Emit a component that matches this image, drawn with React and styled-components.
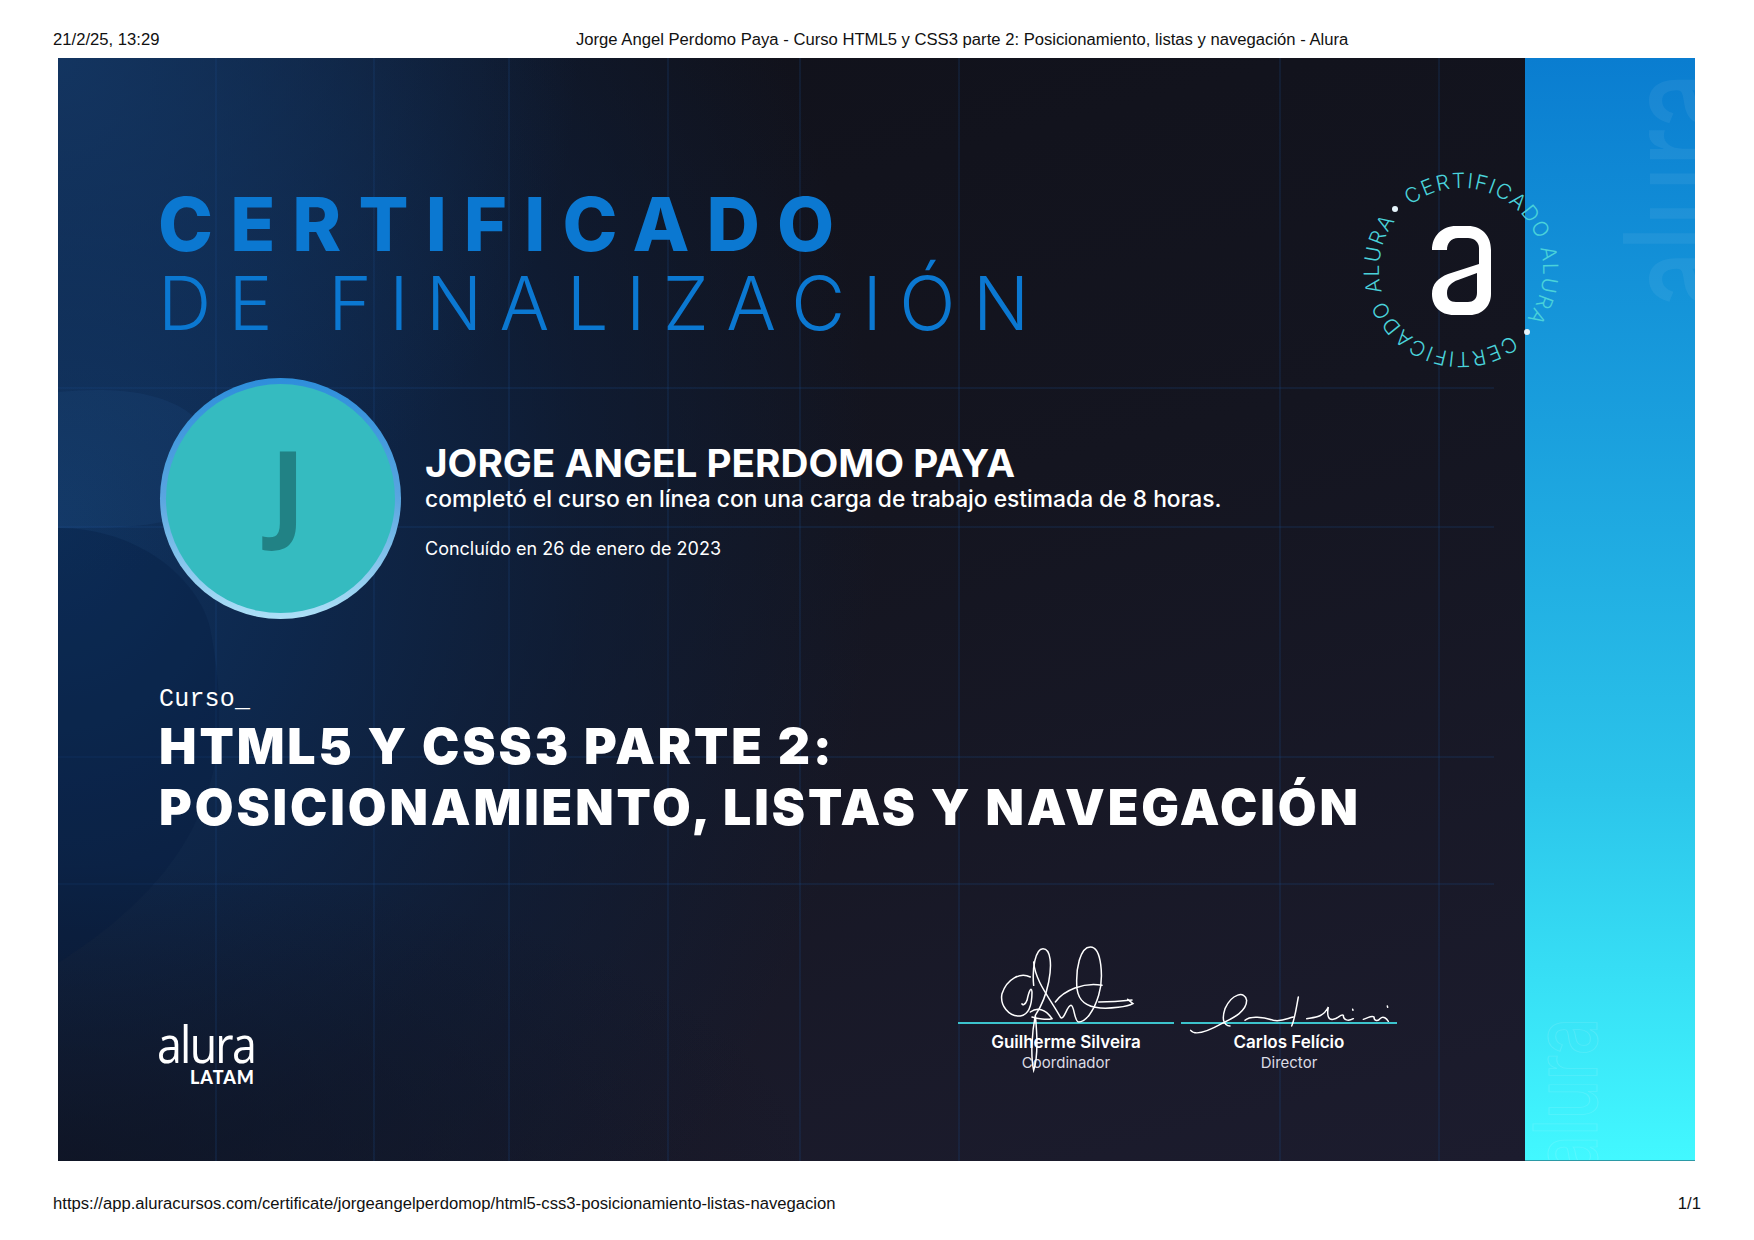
import React from "react";
import styled, { createGlobalStyle } from "styled-components";

const GlobalStyle = createGlobalStyle`
    html, body {
        margin: 0;
        padding: 0;
        background: #fff;
    }
`;

const sans = `"Inter", "Liberation Sans", sans-serif`;
const lineColor = "rgba(24, 72, 135, 0.2)";

// the faint grid behind the certificate, positions are relative to Main
const verticalLines = [157, 315, 450, 609, 741, 900, 1221, 1380];
const horizontalLines = [329, 468, 698, 825];
const gridImages = [
    ...verticalLines.map((x) => `linear-gradient(${lineColor}, ${lineColor}) ${x}px 0 / 2px 100% no-repeat`),
    ...horizontalLines.map((y) => `linear-gradient(${lineColor}, ${lineColor}) 0 ${y}px / 1436px 2px no-repeat`),
].join(", ");

const Page = styled.div`
    width: 1754px;
    height: 1240px;
    overflow: hidden;
    display: flex;
    flex-direction: column;
    font-family: "Liberation Sans", Arial, sans-serif;
    color: #111;
`;

const PrintHeader = styled.header`
    height: 58px;
    box-sizing: border-box;
    padding: 30px 0 0 53px;
    display: flex;
    font-size: 16.65px;
    line-height: 20px;
`;

const PrintDate = styled.span`
    width: 523px;
`;

const PrintFooter = styled.footer`
    flex: 1;
    box-sizing: border-box;
    padding: 33px 53px 0 53px;
    display: flex;
    justify-content: space-between;
    font-size: 16.65px;
    line-height: 20px;
`;

const Certificate = styled.section`
    position: relative;
    margin-left: 58px;
    width: 1637px;
    height: 1103px;
    display: flex;
    flex: none;
    font-family: ${sans};
`;

const Main = styled.div`
    position: relative;
    flex: 1;
    box-sizing: border-box;
    padding: 127px 128px 75px 101px;
    display: flex;
    flex-direction: column;
    color: #fff;
    background: ${gridImages},
        radial-gradient(ellipse 760px 300px at 0 100%, rgba(14, 18, 32, 0.7) 0%, rgba(14, 18, 32, 0) 100%),
        radial-gradient(ellipse 520px 520px at 0 0, rgba(20, 56, 102, 0.85) 0%, rgba(20, 56, 102, 0) 100%),
        radial-gradient(ellipse 820px 1000px at 0 42%, #10335f 0%, rgba(13, 41, 80, 0.92) 30%, rgba(13, 32, 62, 0.6) 65%, rgba(13, 30, 55, 0) 100%),
        linear-gradient(165deg, #10111a 0%, #141520 45%, #1c1c2e 100%);
`;

const Blobs = styled.svg`
    position: absolute;
    left: 0;
    top: 0;
    width: 700px;
    height: 1103px;
`;

const Title = styled.h1`
    position: relative;
    margin: 0 0 0 -1px;
    font-size: 74px;
    line-height: 79px;
    font-weight: ${(p) => (p.$light ? 300 : 800)};
    letter-spacing: ${(p) => p.$spacing}px;
    color: #0b78d1;
    white-space: nowrap;
`;

const Profile = styled.div`
    position: relative;
    margin: 35px 0 0 1px;
    display: flex;
    align-items: center;
    gap: 24px;
`;

const Avatar = styled.div`
    width: 241px;
    height: 241px;
    box-sizing: border-box;
    padding: 6px;
    border-radius: 50%;
    background: linear-gradient(180deg, #2e8edb 0%, #5aa6e0 50%, #aee0f7 100%);
`;

const AvatarFace = styled.div`
    height: 100%;
    box-sizing: border-box;
    padding-left: 15px;
    border-radius: 50%;
    background: #35bbc0;
    color: #218285;
    font-family: "Noto Sans", sans-serif;
    font-size: 107px;
    font-weight: 700;
    line-height: 206px;
    text-align: center;
`;

const ProfileText = styled.div`
    display: flex;
    flex-direction: column;
    padding-top: 4px;
`;

const StudentName = styled.div`
    font-size: 38.7px;
    line-height: 44px;
    font-weight: 700;
`;

const Workload = styled.div`
    font-size: 22.8px;
    line-height: 28px;
    font-weight: 500;
`;

const FinishedAt = styled.div`
    margin-top: 24px;
    font-size: 18px;
    line-height: 24px;
`;

const Course = styled.div`
    position: relative;
    margin-top: 66px;
`;

const CourseLabel = styled.div`
    font-family: "Liberation Mono", monospace;
    font-size: 25px;
    line-height: 30px;
    letter-spacing: 0.2px;
`;

const CourseName = styled.h2`
    margin: 1px 0 0;
    font-size: 50px;
    line-height: 61px;
    font-weight: 900;
    letter-spacing: 2.9px;
    white-space: nowrap;
`;

const Bottom = styled.div`
    position: relative;
    margin-top: auto;
    display: flex;
    justify-content: space-between;
    align-items: flex-end;
`;

const Logo = styled.div`
    display: flex;
    flex-direction: column;
    align-items: flex-end;
    width: 96px;
`;

const LogoWord = styled.div`
    font-family: "Open Sans", sans-serif;
    font-size: 52px;
    line-height: 50px;
    font-weight: 500;
    letter-spacing: -2px;
    transform: scaleX(0.86);
    transform-origin: right;
`;

const LogoRegion = styled.div`
    font-family: "Lato", sans-serif;
    font-size: 18px;
    line-height: 18px;
    font-weight: 900;
    letter-spacing: 1px;
`;

const Signers = styled.div`
    display: flex;
    gap: 7px;
    padding-bottom: 13px;
`;

const Signer = styled.div`
    position: relative;
    width: 216px;
    border-top: 2px solid #3cc3cc;
    padding-top: 7px;
    text-align: center;
`;

const SignerName = styled.div`
    font-size: 17px;
    line-height: 22px;
    font-weight: 600;
`;

const SignerRole = styled.div`
    font-size: 15px;
    line-height: 20px;
    color: #dcdce4;
`;

const Signature = styled.svg`
    position: absolute;
    left: 0;
    top: -84px;
    width: 216px;
    height: 134px;
    fill: none;
    stroke: #fff;
    stroke-width: 4.5;
    stroke-linecap: round;
`;

const Sidebar = styled.aside`
    position: relative;
    width: 170px;
    flex: none;
    overflow: hidden;
    box-sizing: border-box;
    border-bottom: 1px solid #2b9aa6;
    background: linear-gradient(180deg, #0a7dd0 0%, #1a9fdd 33%, #2bc4ea 66%, #42f8ff 100%);
`;

const Watermark = styled.div`
    position: absolute;
    left: ${(p) => p.$left}px;
    top: ${(p) => p.$top}px;
    font-family: ${sans};
    font-size: ${(p) => p.$size}px;
    line-height: 1;
    font-weight: 500;
    white-space: nowrap;
    color: ${(p) => (p.$outline ? "transparent" : "rgba(255, 255, 255, 0.06)")};
    -webkit-text-stroke: ${(p) => (p.$outline ? "1px rgba(255, 255, 255, 0.12)" : "0")};
    writing-mode: vertical-rl;
    transform: rotate(180deg) scaleY(${(p) => p.$squeeze});
`;

const Seal = styled.svg`
    position: absolute;
    left: 1293px;
    top: 102px;
    width: 220px;
    height: 220px;
    overflow: visible;
`;

const SealText = styled.text`
    font-family: ${sans};
    font-size: 21px;
    font-weight: 300;
    fill: #4ad2da;
`;

const SealDot = styled.circle`
    fill: #e6f4fb;
`;

const SIG_ONE = [
    "M330 165 C300 150 260 170 245 215 C238 250 265 285 300 282 C325 278 335 250 335 210 C333 190 325 210 320 235 C315 250 305 250 305 245",
    "M340 190 C335 140 345 80 368 80 C392 80 395 130 385 180 C378 215 365 250 345 280 C335 330 330 400 340 445 C355 400 350 330 345 280",
    "M340 120 C345 180 390 230 420 285 C430 300 440 250 452 250 C462 250 462 300 475 300 C495 300 520 270 535 220 C550 170 545 75 510 75 C480 75 465 140 470 200 C475 240 500 255 540 258 C570 260 620 255 638 245 L622 232",
    "M535 240 C570 240 600 238 635 234",
    "M405 240 C430 205 490 180 545 190",
    "M330 270 C350 255 375 260 395 290 C380 295 350 290 335 285",
];

const SIG_TWO = [
    "M812 325 C825 342 860 330 905 305 C935 290 980 270 980 235 C975 205 935 215 915 260 C905 290 910 310 930 312",
    "M975 295 C990 280 1030 285 1060 295 C1085 300 1100 290 1120 285",
    "M1135 225 C1130 250 1125 290 1115 312",
    "M1160 290 C1190 285 1210 285 1225 255 C1220 280 1225 295 1240 292 C1255 290 1262 275 1270 280 C1270 295 1285 298 1300 290",
    "M1330 292 C1350 285 1355 280 1362 285 C1362 298 1375 298 1380 290 C1390 280 1400 290 1405 298",
    "M1402 252 L1403 256",
    "M1298 262 L1299 265",
];

const SEAL_RADIUS = 82;
const SEAL_PATH = `M${SEAL_RADIUS} 0 A${SEAL_RADIUS} ${SEAL_RADIUS} 0 1 1 -${SEAL_RADIUS} 0 A${SEAL_RADIUS} ${SEAL_RADIUS} 0 1 1 ${SEAL_RADIUS} 0`;

const App = () => {
    return (
        <Page>
            <GlobalStyle />
            <PrintHeader>
                <PrintDate>21/2/25, 13:29</PrintDate>
                <span>Jorge Angel Perdomo Paya - Curso HTML5 y CSS3 parte 2: Posicionamiento, listas y navegación - Alura</span>
            </PrintHeader>

            <Certificate>
                <Main>
                    <Blobs viewBox="0 0 700 1103">
                        <path d="M0 334 C90 325 150 345 157 400 C165 470 90 470 0 470 Z" fill="rgba(70, 130, 200, 0.08)" />
                        <path d="M0 470 C80 470 140 520 152 570 C175 690 165 800 0 905 Z" fill="rgba(5, 25, 60, 0.28)" />
                    </Blobs>
                    <Title $spacing={17.1}>CERTIFICADO</Title>
                    <Title $light $spacing={17.4}>DE FINALIZACIÓN</Title>

                    <Profile>
                        <Avatar>
                            <AvatarFace>J</AvatarFace>
                        </Avatar>
                        <ProfileText>
                            <StudentName>JORGE ANGEL PERDOMO PAYA</StudentName>
                            <Workload>completó el curso en línea con una carga de trabajo estimada de 8 horas.</Workload>
                            <FinishedAt>Concluído en 26 de enero de 2023</FinishedAt>
                        </ProfileText>
                    </Profile>

                    <Course>
                        <CourseLabel>Curso_</CourseLabel>
                        <CourseName>
                            HTML5 Y CSS3 PARTE 2:
                            <br />
                            POSICIONAMIENTO, LISTAS Y NAVEGACIÓN
                        </CourseName>
                    </Course>

                    <Bottom>
                        <Logo>
                            <LogoWord>alura</LogoWord>
                            <LogoRegion>LATAM</LogoRegion>
                        </Logo>
                        <Signers>
                            <Signer>
                                <Signature viewBox="113 54 648 402">
                                    {SIG_ONE.map((d) => <path key={d} d={d} />)}
                                </Signature>
                                <SignerName>Guilherme Silveira</SignerName>
                                <SignerRole>Coordinador</SignerRole>
                            </Signer>
                            <Signer>
                                <Signature viewBox="783 54 648 402">
                                    {SIG_TWO.map((d) => <path key={d} d={d} />)}
                                </Signature>
                                <SignerName>Carlos Felício</SignerName>
                                <SignerRole>Director</SignerRole>
                            </Signer>
                        </Signers>
                    </Bottom>
                </Main>

                <Sidebar>
                    <Watermark $left={78} $top={-46} $size={150} $squeeze={0.66}>alura</Watermark>
                    <Watermark $outline $left={-4} $top={933} $size={88} $squeeze={0.74}>alura</Watermark>
                </Sidebar>

                <Seal viewBox="-110 -110 220 220">
                    <defs>
                        <path id="seal-circle" d={SEAL_PATH} />
                    </defs>
                    <g transform="rotate(-128)">
                        <SealText>
                            <textPath href="#seal-circle" textLength="235">CERTIFICADO ALURA</textPath>
                        </SealText>
                        <SealText>
                            <textPath href="#seal-circle" startOffset={Math.PI * SEAL_RADIUS} textLength="235">CERTIFICADO ALURA</textPath>
                        </SealText>
                    </g>
                    <SealDot cx="-66" cy="-61" r="3" />
                    <SealDot cx="66" cy="62" r="3" />
                    <path
                        transform="translate(-29 -44)"
                        fill="#fff"
                        fillRule="evenodd"
                        d="M0 24 C0 10 10 0 24 0 H36 C50 0 59 10 59 24 V68 C59 80 50 89 38 89 H22 C8 89 0 80 0 68 C0 58 6 52 16 48 L47 38 V22 C47 16 42 12 36 12 H26 C19 12 15 17 15 24 Z M15 67 C15 60 20 56 26 54 L45 47 V67 C45 73 41 76 36 76 H24 C18 76 15 73 15 67 Z"
                    />
                </Seal>
            </Certificate>

            <PrintFooter>
                <span>https://app.aluracursos.com/certificate/jorgeangelperdomop/html5-css3-posicionamiento-listas-navegacion</span>
                <span>1/1</span>
            </PrintFooter>
        </Page>
    );
};

export default App;
